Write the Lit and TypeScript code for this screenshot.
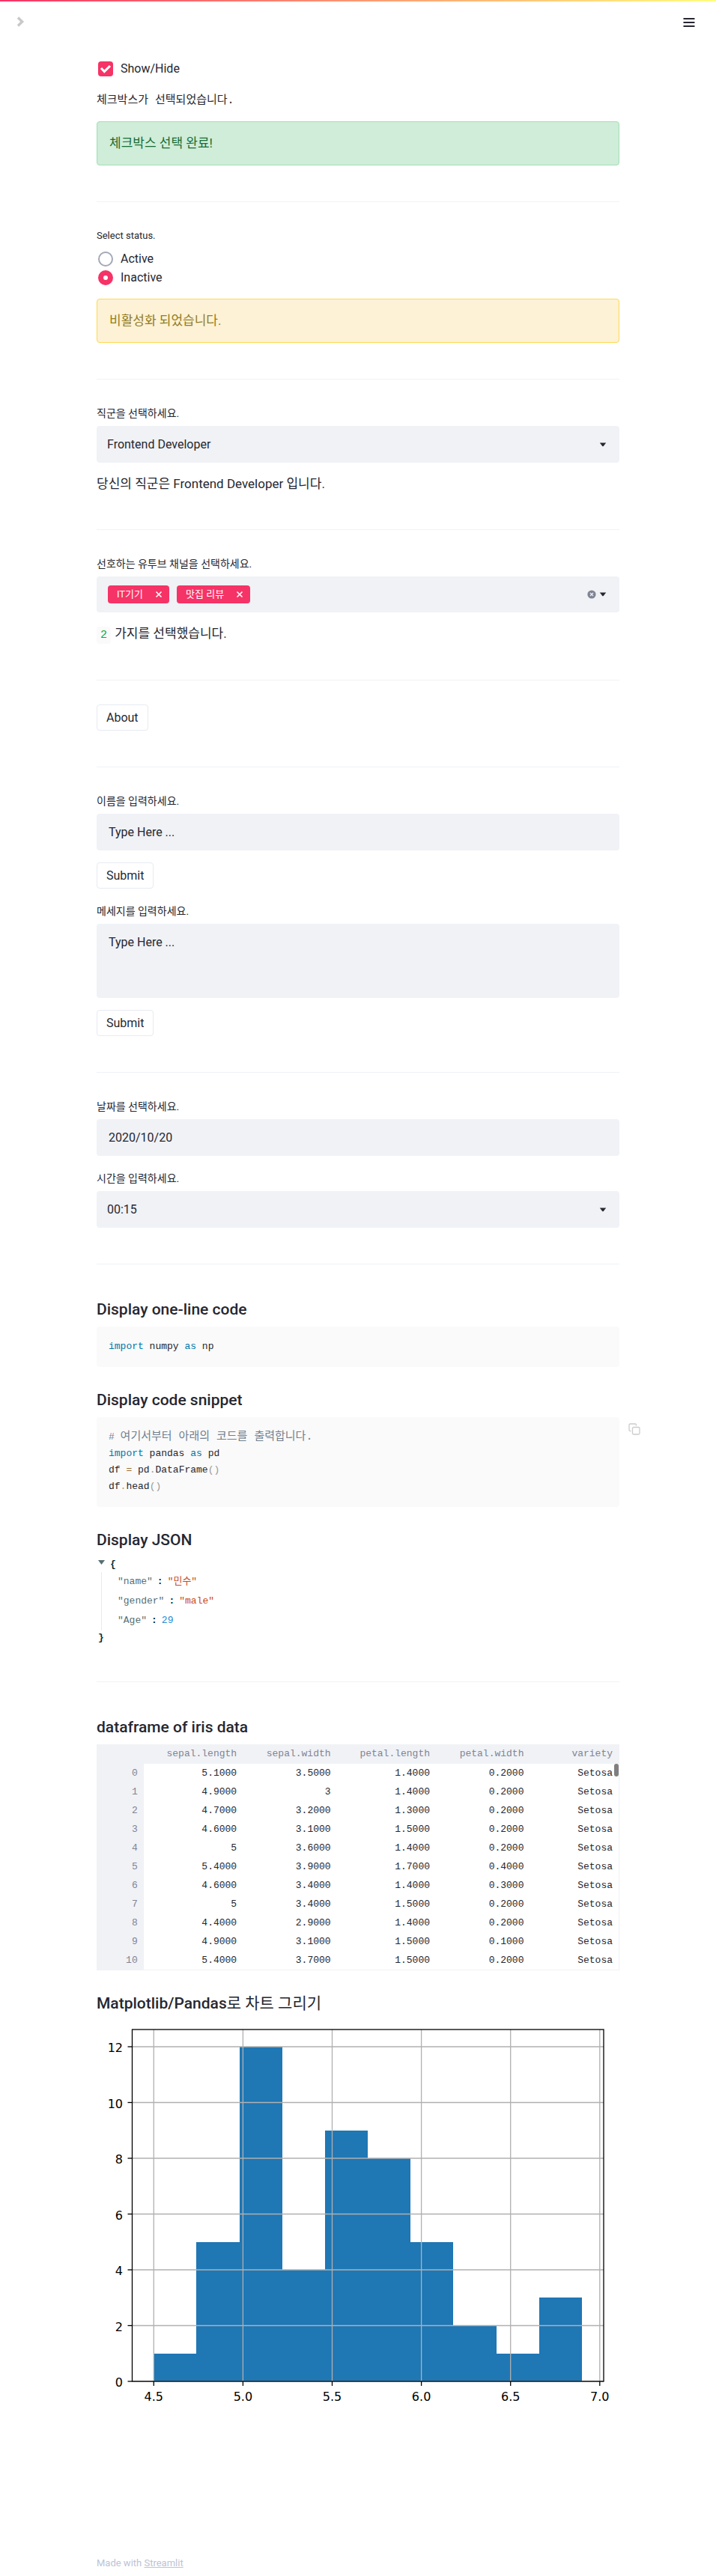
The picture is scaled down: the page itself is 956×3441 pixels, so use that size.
import { LitElement, html, css, svg } from "lit";
import { customElement, state } from "lit/decorators.js";

type Row = [string, string, string, string, string];

const COLUMNS = ["sepal.length", "sepal.width", "petal.length", "petal.width", "variety"];

const ROWS: Row[] = [
  ["5.1000", "3.5000", "1.4000", "0.2000", "Setosa"],
  ["4.9000", "3", "1.4000", "0.2000", "Setosa"],
  ["4.7000", "3.2000", "1.3000", "0.2000", "Setosa"],
  ["4.6000", "3.1000", "1.5000", "0.2000", "Setosa"],
  ["5", "3.6000", "1.4000", "0.2000", "Setosa"],
  ["5.4000", "3.9000", "1.7000", "0.4000", "Setosa"],
  ["4.6000", "3.4000", "1.4000", "0.3000", "Setosa"],
  ["5", "3.4000", "1.5000", "0.2000", "Setosa"],
  ["4.4000", "2.9000", "1.4000", "0.2000", "Setosa"],
  ["4.9000", "3.1000", "1.5000", "0.1000", "Setosa"],
  ["5.4000", "3.7000", "1.5000", "0.2000", "Setosa"],
];

const caret = html`<svg class="caret" viewBox="0 0 10 6" width="10" height="6" aria-hidden="true">
  <path d="M0.800 0.600h8.400L5.700 4.900a1 1 0 0 1-1.400 0z" fill="#262730" />
</svg>`;

@customElement("iris-histogram")
export class IrisHistogram extends LitElement {
  static styles = css`
    :host {
      display: block;
    }
    svg {
      display: block;
      width: 100%;
      height: auto;
    }
    text {
      font-family: "DejaVu Sans", sans-serif;
      font-size: 16px;
      fill: #000;
    }
  `;

  private counts = [1, 5, 12, 4, 9, 8, 5, 2, 1, 3];
  private base = 482;

  private px(value: number) {
    return 76.3 + (value - 4.5) * 238.2;
  }

  private py(count: number) {
    return this.base - count * 37.25;
  }

  render() {
    const xs = [4.5, 5, 5.5, 6, 6.5, 7];
    const ys = [0, 2, 4, 6, 8, 10, 12];
    const base = this.base;
    return html`<svg viewBox="0 0 698 523" role="img" aria-label="Histogram">
      <g fill="#1f77b4" shape-rendering="crispEdges">
        ${this.counts.map(
          (n, i) => svg`<rect x=${this.px(4.5 + i * 0.24)} y=${this.py(n)}
            width=${this.px(0.24) - this.px(0)} height=${base - this.py(n)} />`,
        )}
      </g>
      <g stroke="#b0b0b0" stroke-width="1.3">
        ${xs.map((v) => svg`<line x1=${this.px(v)} x2=${this.px(v)} y1="12" y2=${base} />`)}
        ${ys.map((v) => svg`<line x1="47.5" x2="677" y1=${this.py(v)} y2=${this.py(v)} />`)}
      </g>
      <rect x="47.5" y="12" width="629.5" height=${base - 12} fill="none" stroke="#000" stroke-width="1.3" />
      <g stroke="#000" stroke-width="1.3">
        ${xs.map((v) => svg`<line x1=${this.px(v)} x2=${this.px(v)} y1=${base} y2=${base + 6} />`)}
        ${ys.map((v) => svg`<line x1="41.5" x2="47.5" y1=${this.py(v)} y2=${this.py(v)} />`)}
      </g>
      ${xs.map((v) => svg`<text x=${this.px(v)} y=${base + 26} text-anchor="middle">${v.toFixed(1)}</text>`)}
      ${ys.map((v) => svg`<text x="35" y=${this.py(v) + 7} text-anchor="end">${v}</text>`)}
    </svg>`;
  }
}

@customElement("app-root")
export class AppRoot extends LitElement {
  static styles = css`
    :host {
      display: block;
      min-height: 100vh;
      background: #fff;
      color: #262730;
      font: 16px/26px Roboto, "Noto Sans CJK KR", sans-serif;
    }
    *,
    *::before,
    *::after {
      box-sizing: border-box;
    }
    button,
    input,
    select,
    textarea {
      margin: 0;
      font: inherit;
      color: inherit;
    }
    .decoration {
      height: 2px;
      background: linear-gradient(90deg, #f63366, #fffd80);
    }
    .toolbar {
      display: flex;
      justify-content: space-between;
      align-items: center;
      height: 54px;
      padding: 0 28px 0 20px;
    }
    .icon-button {
      display: flex;
      border: 0;
      padding: 0;
      background: none;
    }
    main {
      display: flex;
      flex-direction: column;
      max-width: 730px;
      margin: 0 auto;
      padding: 23px 16px 0;
    }
    hr {
      width: 100%;
      height: 1px;
      border: 0;
      margin: 48px 0 32px;
      background: #f0f2f6;
    }
    p {
      margin: 16px 0 0;
      font-size: 17px;
      line-height: 25px;
    }
    .mono {
      margin-top: 18px;
      font-family: "Liberation Mono", "Noto Sans CJK KR", monospace;
      font-size: 15px;
    }
    .choice {
      display: flex;
      align-items: center;
      gap: 10px;
      height: 25px;
      padding-left: 2px;
    }
    .choice input {
      appearance: none;
      width: 20px;
      height: 20px;
    }
    .tick input {
      border-radius: 4px;
      background: #f63366
        url("data:image/svg+xml,%3Csvg xmlns='http://www.w3.org/2000/svg' viewBox='0 0 20 20'%3E%3Cpath d='M4 9l4.300 4.500L16 6' fill='none' stroke='white' stroke-width='3'/%3E%3C/svg%3E");
    }
    .round input {
      border: 2px solid #a3a8b8;
      border-radius: 50%;
      background: #fff;
    }
    .round input:checked {
      border: 7px solid #f63366;
    }
    .alert {
      padding: 16px;
      border: 1px solid;
      border-radius: 4px;
      min-height: 59px;
      font-size: 17px;
      line-height: 25px;
    }
    .success {
      margin-top: 15px;
      color: #176c36;
      border-color: #a3dfb7;
      background: #cfedd8;
    }
    .warning {
      margin-top: 16px;
      color: #927c25;
      border-color: #fcd953;
      background: #fdf2d5;
    }
    .label {
      display: block;
      border: 0;
      padding: 0;
      margin: 3px 0 7px;
      font-size: 14px;
      line-height: 20px;
    }
    fieldset {
      border: 0;
      margin: 3px 0 0;
      padding: 0;
      min-width: 0;
    }
    fieldset .label {
      margin: 0 0 8px;
      font-size: 13px;
    }
    .field {
      display: flex;
      align-items: center;
      position: relative;
      height: 49px;
      border-radius: 4px;
      background: #f0f2f6;
    }
    .field .caret {
      position: absolute;
      right: 17px;
      pointer-events: none;
    }
    .field select {
      appearance: none;
      width: 100%;
      height: 100%;
      padding: 0 32px 0 14px;
      border: 0;
      background: none;
    }
    .field input {
      width: 100%;
      height: 100%;
      border: 0;
      padding: 0 16px;
      background: none;
    }
    ::placeholder {
      color: #262730;
      opacity: 1;
    }
    textarea {
      display: block;
      width: 100%;
      height: 99px;
      border: 0;
      border-radius: 4px;
      padding: 12px 16px;
      resize: none;
      background: #f0f2f6;
    }
    .multi {
      gap: 10px;
      height: 48px;
      padding: 0 31px 0 15px;
    }
    .tag {
      display: flex;
      align-items: center;
      gap: 16px;
      height: 24px;
      padding: 0 9px 0 12px;
      border-radius: 4px;
      background: #f63366;
      color: #fff;
      font-size: 13px;
      line-height: 24px;
    }
    .clear {
      margin-left: auto;
    }
    code {
      display: inline-block;
      margin-right: 1px;
      padding: 0 5px;
      border-radius: 4px;
      background: #fafafa;
      color: #09ab3b;
      font: 15px/23px "Liberation Mono", monospace;
    }
    .btn {
      align-self: flex-start;
      height: 35px;
      padding: 0 12px;
      border: 1px solid #e6eaf1;
      border-radius: 4px;
      background: #fff;
      line-height: 26px;
    }
    .field + .btn,
    textarea + .btn {
      margin-top: 16px;
    }
    .btn + .label,
    .field + .label {
      margin-top: 20px;
    }
    h3 {
      margin: 0 0 9px;
      font-size: 21px;
      line-height: 28px;
      font-weight: 500;
    }
    h3 span {
      font-weight: 400;
    }
    hr + h3 {
      margin-top: 14px;
    }
    .snippet {
      position: relative;
    }
    pre {
      margin: 0 0 30px;
      padding: 16px;
      border-radius: 4px;
      background: #fafafa;
      font: 13px/22px "Liberation Mono", "Noto Sans CJK KR", monospace;
    }
    .line {
      display: block;
      height: 22px;
    }
    .kw {
      color: #07a;
    }
    .cm {
      color: #708090;
    }
    .cm span {
      font-size: 15px;
    }
    .op {
      color: #9a6e3a;
    }
    .pn {
      color: #999;
    }
    .copy {
      position: absolute;
      left: 100%;
      top: 8px;
      margin-left: 12px;
    }
    .json {
      display: flex;
      flex-direction: column;
      font: 13px/20px "Liberation Mono", "Noto Sans CJK KR", monospace;
      color: #002b36;
    }
    .brace {
      display: flex;
      gap: 7px;
      height: 20px;
      padding-left: 2px;
      font-weight: 700;
    }
    .brace svg {
      margin-top: 4px;
    }
    .members {
      margin-left: 6px;
      padding-left: 21px;
      border-left: 1px solid #ebebeb;
    }
    .member {
      display: flex;
      gap: 6px;
      height: 26px;
      line-height: 26px;
    }
    .key {
      color: #586e75;
    }
    .str {
      color: #cb4b16;
    }
    .num {
      color: #268bd2;
    }
    .frame {
      position: relative;
      border: 1px solid #f0f2f6;
      border-width: 0 1px 1px 0;
    }
    table {
      width: 100%;
      table-layout: fixed;
      border-collapse: collapse;
      font: 13px/24px "Liberation Mono", monospace;
    }
    th,
    td {
      height: 25px;
      padding: 0 8px;
      text-align: right;
      font-weight: 400;
    }
    thead th {
      height: 26px;
    }
    th {
      background: #f0f2f6;
      color: #808495;
    }
    .w-index {
      width: 9%;
    }
    .w-length {
      width: 19%;
    }
    .w-width {
      width: 18%;
    }
    .thumb {
      position: absolute;
      right: 0;
      top: 26px;
      width: 6px;
      height: 17px;
      border-radius: 3px;
      background: #7f7f7f;
    }
    .frame + h3 {
      margin-top: 30px;
    }
    footer {
      max-width: 730px;
      margin: 0 auto;
      padding: 192px 16px 8px;
      font-size: 13px;
      line-height: 20px;
      color: #bcc3d6;
    }
    footer a {
      color: inherit;
    }
  `;

  @state() private shown = true;
  @state() private status = "Inactive";
  private channels = ["IT기기", "맛집 리뷰"];

  render() {
    return html`
      <div class="decoration"></div>
      <header class="toolbar">
        <button class="icon-button" aria-label="Open sidebar">
          <svg viewBox="0 0 16 16" width="16" height="16">
            <path d="M4 2.500L9.600 8l-5.600 5.500" fill="none" stroke="#c8c8ca" stroke-width="3.400" />
          </svg>
        </button>
        <button class="icon-button" aria-label="Menu">
          <svg viewBox="0 0 16 16" width="16" height="16">
            <path d="M0.500 4h15M0.500 9h15M0.500 14h15" stroke="#262730" stroke-width="2" />
          </svg>
        </button>
      </header>
      <main>
        <label class="choice tick">
          <input type="checkbox" .checked=${this.shown} @change=${() => (this.shown = !this.shown)} />
          Show/Hide
        </label>
        <p class="mono">체크박스가 선택되었습니다.</p>
        <div class="alert success">체크박스 선택 완료!</div>
        <hr />

        <fieldset>
          <legend class="label">Select status.</legend>
          ${["Active", "Inactive"].map(
            (s) => html`<label class="choice round">
              <input type="radio" name="status" .checked=${this.status === s} @change=${() => (this.status = s)} />
              ${s}
            </label>`,
          )}
        </fieldset>
        <div class="alert warning">비활성화 되었습니다.</div>
        <hr />

        <label class="label" for="job">직군을 선택하세요.</label>
        <div class="field">
          <select id="job"><option>Frontend Developer</option></select>
          ${caret}
        </div>
        <p>당신의 직군은 Frontend Developer 입니다.</p>
        <hr />

        <div class="label" id="channels">선호하는 유투브 채널을 선택하세요.</div>
        <div class="field multi" role="group" aria-labelledby="channels">
          ${this.channels.map(
            (c) => html`<span class="tag">${c}
              <button class="icon-button" aria-label="Remove">
                <svg viewBox="0 0 10 10" width="10" height="10">
                  <path d="M1.500 1.500l7 7M8.500 1.500l-7 7" stroke="#fff" stroke-width="1.600" />
                </svg>
              </button>
            </span>`,
          )}
          <button class="icon-button clear" aria-label="Clear all">
            <svg viewBox="0 0 12 12" width="12" height="12">
              <circle cx="6" cy="6" r="5.600" fill="#808495" />
              <path d="M4 4l4 4M8 4l-4 4" stroke="#f0f2f6" stroke-width="1.200" />
            </svg>
          </button>
          ${caret}
        </div>
        <p><code>2</code> 가지를 선택했습니다.</p>
        <hr />

        <button class="btn">About</button>
        <hr />

        <label class="label" for="name">이름을 입력하세요.</label>
        <div class="field"><input id="name" type="text" placeholder="Type Here ..." /></div>
        <button class="btn">Submit</button>
        <label class="label" for="message">메세지를 입력하세요.</label>
        <textarea id="message" placeholder="Type Here ..."></textarea>
        <button class="btn">Submit</button>
        <hr />

        <label class="label" for="date">날짜를 선택하세요.</label>
        <div class="field"><input id="date" type="text" value="2020/10/20" /></div>
        <label class="label" for="time">시간을 입력하세요.</label>
        <div class="field">
          <select id="time"><option>00:15</option></select>
          ${caret}
        </div>
        <hr />

        <h3>Display one-line code</h3>
        <pre><span class="line"><span class="kw">import</span> numpy <span class="kw">as</span> np</span></pre>
        <h3>Display code snippet</h3>
        <div class="snippet">
          <pre><span class="line cm"># <span>여기서부터 아래의 코드를 출력합니다.</span></span><span class="line"><span class="kw">import</span> pandas <span class="kw">as</span> pd</span><span class="line">df <span class="op">=</span> pd<span class="pn">.</span>DataFrame<span class="pn">()</span></span><span class="line">df<span class="pn">.</span>head<span class="pn">()</span></span></pre>
          <button class="icon-button copy" aria-label="Copy">
            <svg viewBox="0 0 16 16" width="16" height="16" fill="none" stroke="#ccc" stroke-width="1.300">
              <path d="M3.500 10.500H2.500a1.500 1.500 0 0 1-1.500-1.500V2.500A1.500 1.500 0 0 1 2.500 1H9a1.500 1.500 0 0 1 1.500 1.500v1" />
              <rect x="5.500" y="5.500" width="9.500" height="9.500" rx="1.500" />
            </svg>
          </button>
        </div>
        <h3>Display JSON</h3>
        <div class="json">
          <div class="brace">
            <svg viewBox="0 0 9 6" width="9" height="6"><path d="M0 0h9L4.500 6z" fill="#586e75" /></svg>{
          </div>
          <div class="members">
            <div class="member"><span class="key">"name"</span><b>:</b><span class="str">"민수"</span></div>
            <div class="member"><span class="key">"gender"</span><b>:</b><span class="str">"male"</span></div>
            <div class="member"><span class="key">"Age"</span><b>:</b><span class="num">29</span></div>
          </div>
          <div class="brace">}</div>
        </div>
        <hr />

        <h3>dataframe of iris data</h3>
        <div class="frame">
          <table>
            <thead>
              <tr>
                <th class="w-index"></th>
                ${COLUMNS.map(
                  (c) => html`<th scope="col" class=${c.endsWith("length") ? "w-length" : c.endsWith("width") ? "w-width" : ""}>${c}</th>`,
                )}
              </tr>
            </thead>
            <tbody>
              ${ROWS.map(
                (row, i) => html`<tr><th scope="row">${i}</th>${row.map((cell) => html`<td>${cell}</td>`)}</tr>`,
              )}
            </tbody>
          </table>
          <div class="thumb"></div>
        </div>
        <h3>Matplotlib/Pandas<span>로 차트 그리기</span></h3>
        <iris-histogram></iris-histogram>
      </main>
      <footer>Made with <a href="#">Streamlit</a></footer>
    `;
  }
}
